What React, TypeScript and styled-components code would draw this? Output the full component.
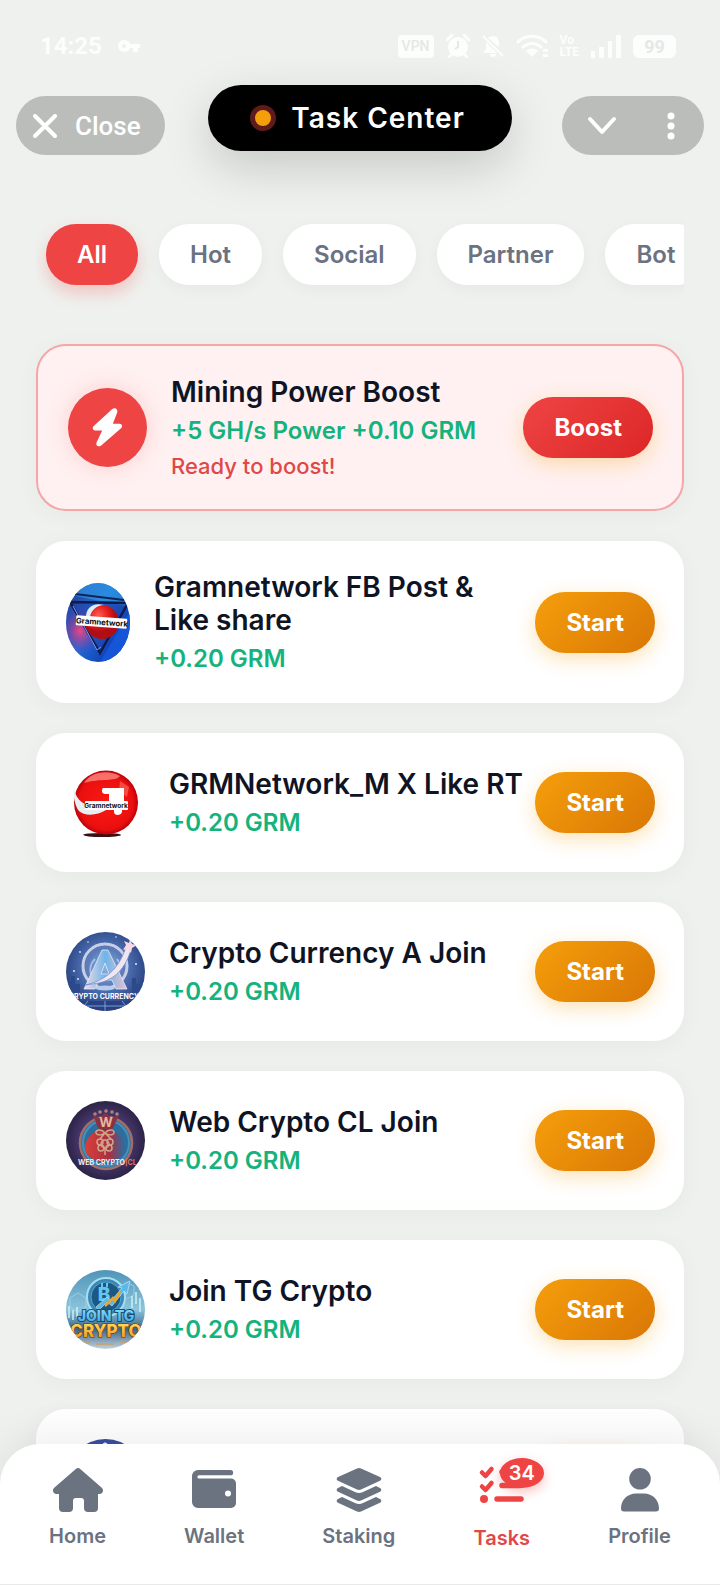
import { ReactNode, useState } from "react";
import styled, { createGlobalStyle, css } from "styled-components";

const GlobalStyles = createGlobalStyle`
    :root {
        --color-page: #eff1ee;
        --color-card: #ffffff;
        --color-red: #ef4444;
        --color-red-dark: #dc2626;
        --color-red-text: #e04848;
        --color-amber: #f59e0b;
        --color-amber-dark: #d97706;
        --color-green: #14b37d;
        --color-ink: #0f1424;
        --color-muted: #6b7280;
        --color-status: #fcfdfc;
        --color-pill: #bbbdbb;
    }

    * {
        box-sizing: border-box;
        margin: 0;
        padding: 0;
    }

    body {
        font-family: Inter, "Liberation Sans", sans-serif;
        background-color: var(--color-page);
        color: var(--color-ink);
    }

    button {
        border: none;
        font: inherit;
        cursor: pointer;
    }

    svg {
        display: block;
    }
`;

const Screen = styled.div`
    position: relative;
    display: flex;
    flex-direction: column;
    height: 100vh;
    overflow: hidden;
`;

const StatusBar = styled.div`
    display: flex;
    align-items: center;
    justify-content: space-between;
    padding: 34px 44px 0 40px;
    height: 58px;
    color: var(--color-status);
    font-family: Roboto, sans-serif;
`;

const StatusGroup = styled.div`
    display: flex;
    align-items: center;
    gap: 12px;
`;

const Clock = styled.span`
    font-size: 24px;
    font-weight: 700;
    line-height: 24px;
    margin-right: 3px;
`;

const StatusTag = styled.span`
    padding: 0 4px;
    border-radius: 4px;
    background-color: var(--color-status);
    color: #e6e8e6;
    font-size: 14px;
    font-weight: 500;
    line-height: 23px;
`;

const Volte = styled.span`
    display: grid;
    font-size: 12px;
    font-weight: 800;
    line-height: 12px;
`;

const Battery = styled.span`
    width: 43px;
    border-radius: 6px;
    background-color: var(--color-status);
    color: #e6e8e6;
    font-size: 18px;
    font-weight: 700;
    line-height: 23px;
    text-align: center;
`;

const Header = styled.header`
    display: grid;
    grid-template-columns: 1fr auto 1fr;
    align-items: end;
    padding: 27px 16px 0;
`;

const pill = css`
    display: flex;
    align-items: center;
    height: 59px;
    border-radius: 30px;
    background-color: var(--color-pill);
    color: #ffffff;
`;

const CloseButton = styled.button`
    ${pill}
    justify-self: start;
    gap: 18px;
    padding: 0 24px 0 17px;
    font-family: Roboto, sans-serif;
    font-size: 26px;
    font-weight: 500;
`;

const WindowControls = styled.div`
    ${pill}
    justify-self: end;
    gap: 36px;
    padding: 0 16px 0 24px;
`;

const ControlButton = styled.button`
    display: grid;
    place-items: center;
    height: 100%;
    background: none;
    color: inherit;
`;

const Island = styled.div`
    display: flex;
    align-items: center;
    gap: 15px;
    height: 66px;
    margin-bottom: 4px;
    padding: 0 47px 0 42px;
    border-radius: 33px;
    background-color: #000000;
    color: #ffffff;
    box-shadow: 0 16px 48px rgba(0, 0, 0, 0.17);

    h1 {
        font-size: 28px;
        font-weight: 600;
        letter-spacing: 1px;
    }
`;

const Dot = styled.span`
    width: 26px;
    height: 26px;
    border: 5px solid #5f1b1b;
    border-radius: 50%;
    background-color: var(--color-amber);
`;

const Filters = styled.div`
    display: flex;
    gap: 21px;
    flex-shrink: 0;
    margin: 45px 36px 0;
    padding: 24px 10px 35px;
    overflow-x: auto;
    scrollbar-width: none;
`;

const FilterButton = styled.button<{ $active: boolean }>`
    flex-shrink: 0;
    padding: 16px 31px;
    border-radius: 30px;
    font-size: 24px;
    font-weight: 600;
    line-height: 29px;
    background-color: var(--color-card);
    color: var(--color-muted);
    box-shadow: 0 4px 16px rgba(0, 0, 0, 0.04);

    ${(props) => props.$active && css`
        background-color: var(--color-red);
        color: #ffffff;
        box-shadow: 0 8px 16px rgba(239, 68, 68, 0.25);
    `}
`;

const TaskList = styled.main`
    flex: 1;
    min-height: 0;
    display: flex;
    flex-direction: column;
    gap: 30px;
    padding: 24px 36px 160px;
    overflow-y: auto;
    scrollbar-width: none;
`;

const Card = styled.article<{ $highlight?: boolean }>`
    flex-shrink: 0;
    display: flex;
    align-items: center;
    gap: 8px;
    padding: 30px 29px 30px 30px;
    border-radius: 30px;
    background-color: var(--color-card);
    box-shadow: 0 4px 24px rgba(0, 0, 0, 0.04);

    ${(props) => props.$highlight && css`
        border: 2px solid #f5a6a6;
        background-color: #fff1f1;
    `}
`;

const Avatar = styled.div<{ $narrow?: boolean }>`
    flex-shrink: 0;
    width: ${(props) => (props.$narrow ? "64px" : "79px")};
    height: 79px;
    margin-right: 16px;
    border-radius: 50%;
    overflow: hidden;

    svg {
        width: 100%;
        height: 100%;
    }
`;

const BoostIcon = styled(Avatar)`
    display: grid;
    place-items: center;
    background-color: var(--color-red);
    box-shadow: 0 0 24px rgba(239, 68, 68, 0.2);

    svg {
        width: 31px;
        height: 41px;
    }
`;

const Info = styled.div`
    flex: 1;
    min-width: 0;
`;

const Title = styled.h2`
    font-size: 28px;
    font-weight: 600;
    line-height: 33px;
`;

const Reward = styled.p`
    margin-top: 8px;
    font-size: 24px;
    font-weight: 600;
    line-height: 28px;
    color: var(--color-green);
`;

const Status = styled.p`
    margin-top: 8px;
    font-size: 22px;
    font-weight: 500;
    line-height: 26px;
    color: var(--color-red-text);
`;

const ActionButton = styled.button<{ $danger?: boolean }>`
    flex-shrink: 0;
    padding: 16px 31px;
    border-radius: 30px;
    font-size: 24px;
    font-weight: 700;
    line-height: 29px;
    color: #ffffff;
    background: ${(props) => props.$danger
        ? "linear-gradient(135deg, var(--color-red), var(--color-red-dark))"
        : "linear-gradient(135deg, var(--color-amber), var(--color-amber-dark))"};
    box-shadow: 0 6px 20px rgba(245, 158, 11, 0.3);
`;

const BottomNav = styled.nav`
    position: absolute;
    inset: auto 0 0;
    display: flex;
    justify-content: space-around;
    align-items: flex-start;
    padding: 20px 10px 34px;
    border-bottom: 1px solid #e8e9e8;
    border-radius: 40px 40px 0 0;
    background-color: var(--color-card);
    box-shadow: 0 -8px 40px rgba(0, 0, 0, 0.07);
`;

const NavLink = styled.a<{ $active?: boolean }>`
    display: flex;
    flex-direction: column;
    align-items: center;
    gap: ${(props) => (props.$active ? "10px" : "8px")};
    font-size: 20px;
    font-weight: 600;
    line-height: 24px;
    text-decoration: none;
    color: ${(props) => (props.$active ? "var(--color-red-text)" : "var(--color-muted)")};

    svg {
        width: 52px;
        height: 52px;
    }
`;

const NavIcon = styled.span`
    position: relative;
`;

const Badge = styled.span`
    position: absolute;
    top: -6px;
    right: -16px;
    padding: 3px 9px;
    border-radius: 50%;
    background-color: var(--color-red);
    color: #ffffff;
    font-size: 20px;
    font-weight: 600;
    line-height: 24px;
    box-shadow: 0 4px 12px rgba(239, 68, 68, 0.35);
`;

function StatusIcons(){
    return (
        <>
            <svg width="24" height="24" viewBox="0 0 24 24" fill="currentColor">
                <circle cx="12" cy="13" r="10" />
                <path d="M1 6 6 1M18 1l5 5M5 21l-2 2M19 21l2 2" stroke="currentColor" strokeWidth="3" strokeLinecap="round" />
                <path d="M12 7v6l-3 2" fill="none" stroke="#e6e8e6" strokeWidth="2" />
            </svg>
            <svg width="22" height="24" viewBox="0 0 22 24" fill="currentColor">
                <path d="M6 4c1-1 3-2 5-2 4 0 6 3 6 7v4zM4 8l11 11H1l3-4zM8 20h6a3 3 0 0 1-6 0z" />
                <path d="m1 2 20 20" stroke="currentColor" strokeWidth="2" />
            </svg>
            <svg width="32" height="24" viewBox="0 0 32 24" fill="none" stroke="currentColor" strokeWidth="3">
                <path d="M1 9c8-9 22-9 30 0M6 14c6-6 14-6 20 0M11 18c3-3 7-3 10 0" />
                <path d="m12 19 4 4 4-4c-2-3-6-3-8 0zM27 15h5v3h-5zM27 20h5v3h-5z" fill="currentColor" stroke="none" />
            </svg>
            <Volte><span>Vo</span><span>LTE</span></Volte>
            <svg width="30" height="24" viewBox="0 0 30 24" fill="currentColor">
                <path d="M0 17h4v7H0zM8 13h5v11H8zM17 7h4v17h-4zM25 1h5v23h-5z" />
            </svg>
        </>
    );
}

function BoltIcon(){
    return (
        <svg viewBox="0 0 32 42" fill="#ffffff">
            <path d="M21 1.800C24 0 27 2.200 26 5.500L21.500 17H28.500C31 17 32 20 30 21.800L9.500 39.500C6.500 41.800 3.500 39.500 4.800 36.200L10.500 24H3.200C.8 24 0 21.200 1.800 19.500z" />
        </svg>
    );
}

function GramShieldArt(){
    return (
        <svg viewBox="0 0 64 79" preserveAspectRatio="none">
            <defs>
                <linearGradient id="shieldBg" x1="0" y1="0" x2="1" y2="0.7">
                    <stop offset="0" stopColor="#27358f" />
                    <stop offset="0.5" stopColor="#1f6fd8" />
                    <stop offset="1" stopColor="#0b2fa8" />
                </linearGradient>
                <radialGradient id="shieldGlow">
                    <stop offset="0" stopColor="#f0457f" />
                    <stop offset="1" stopColor="#7a2fa8" stopOpacity="0" />
                </radialGradient>
                <radialGradient id="redBall" cx="0.4" cy="0.3">
                    <stop offset="0" stopColor="#ff5a50" />
                    <stop offset="0.6" stopColor="#e31b1b" />
                    <stop offset="1" stopColor="#b00d14" />
                </radialGradient>
            </defs>
            <rect width="64" height="79" fill="url(#shieldBg)" />
            <path d="M12 0H64V24L10 13z" fill="#2f96e6" opacity="0.7" />
            <ellipse cx="14" cy="48" rx="20" ry="24" fill="url(#shieldGlow)" />
            <path d="M34 79 64 28V79z" fill="#1556d8" />
            <path d="M9 11 58 17" stroke="#132253" strokeWidth="2" />
            <path d="m4 19 58 1-28 50z" fill="#25369c" fillOpacity="0.35" stroke="#101b48" strokeWidth="2.500" />
            <path d="m7 23 24 44 4-3" fill="none" stroke="#7f9cff" strokeWidth="1" />
            <circle cx="36" cy="39" r="17" fill="url(#redBall)" />
            <path d="M20 34c0-10 8-15 18-12-7 0-13 5-14 12z" fill="#dfeefb" />
            <g transform="rotate(4 36 39)">
                <rect x="10" y="34" width="51" height="10" rx="1" fill="#ffffff" />
                <text x="36" y="42" fontSize="7.800" fontWeight="700" textAnchor="middle" fill="#0b0b0f">Gramnetwork</text>
            </g>
        </svg>
    );
}

function GramBallArt(){
    return (
        <svg viewBox="0 0 79 79">
            <defs>
                <radialGradient id="glossBall" cx="0.5" cy="0.5">
                    <stop offset="0" stopColor="#fb1a12" />
                    <stop offset="0.85" stopColor="#ea0f0f" />
                    <stop offset="1" stopColor="#bd0008" />
                </radialGradient>
            </defs>
            <rect width="79" height="79" fill="#ffffff" />
            <ellipse cx="36" cy="72" rx="19" ry="2" fill="#3b1013" />
            <circle cx="40" cy="39.500" r="32" fill="url(#glossBall)" />
            <path d="M18 20C24 9 42 6 54 13c-4 6-20 2-36 7z" fill="#ff9a90" opacity="0.7" />
            <path d="m54 18 9 6-2 10-8-7z" fill="#ff8478" opacity="0.5" />
            <path d="M8 26c3 12 10 17 22 17h10v4c-9 6-22 6-27 1-4-5-6-15-5-22z" fill="#e6eff1" />
            <path d="M37 25h21v14h-2v10c-1 4-8 4-8 0v-5h-5V31h-4c-3 0-4-4-2-6z" fill="#ffffff" />
            <rect x="19" y="38" width="43" height="9" rx="1" fill="#ffffff" />
            <text x="40" y="45" fontSize="6.500" fontWeight="700" textAnchor="middle" fill="#111111">Gramnetwork</text>
        </svg>
    );
}

function CryptoCurrencyArt(){
    return (
        <svg viewBox="0 0 79 79">
            <defs>
                <radialGradient id="nightBg" cx="0.5" cy="0.45">
                    <stop offset="0" stopColor="#8fb2e0" />
                    <stop offset="0.6" stopColor="#4a6cae" />
                    <stop offset="1" stopColor="#2f4888" />
                </radialGradient>
                <linearGradient id="letterA" x1="0" x2="1">
                    <stop offset="0" stopColor="#f0d9e6" />
                    <stop offset="0.5" stopColor="#6fb5e6" />
                    <stop offset="1" stopColor="#e9bfd0" />
                </linearGradient>
            </defs>
            <rect width="79" height="79" fill="url(#nightBg)" />
            <path d="M0 60V50h5v-6h4v8h5v8zM79 60V47h-4v5h-5v-6h-4v14z" fill="#2b4a8c" />
            <path d="M0 69h79v10H0z" fill="#2c3f82" />
            <path d="M39 69v10M22 69l-8 10M56 69l8 10M10 74h60" stroke="#86b8ec" strokeWidth="0.800" />
            <circle cx="39" cy="34" r="22" fill="none" stroke="#c6cfe6" strokeWidth="3" />
            <circle cx="39" cy="34" r="19" fill="none" stroke="#697fb8" strokeWidth="1" />
            <path d="M25 43c-2-8 0-12 4-16M51 43c4-8 3-12 0-16" stroke="#d2ebff" strokeWidth="2" fill="none" opacity="0.6" />
            <path fillRule="evenodd" d="M36 18h6l19 39H50l-4-9H33l-4 9H18zM39 31l-4 11h8z" fill="url(#letterA)" stroke="#e6eaf8" strokeWidth="0.800" />
            <path d="M19 53c20-4 34-16 41-38l6-1c-6 23-18 36-40 38z" fill="#f1e6f0" stroke="#7090ce" strokeWidth="0.800" />
            <path d="m64 7 2 5 5 1-5 3-1 5-3-4-5 1 3-5-2-4 5 2z" fill="#f7d8e4" />
            <ellipse cx="39" cy="56" rx="10" ry="2.500" fill="#b6cdec" />
            <g fill="#d7ecff">
                <circle cx="14" cy="20" r="0.900" /><circle cx="22" cy="10" r="0.800" /><circle cx="8" cy="39" r="1" />
                <circle cx="70" cy="32" r="1" /><circle cx="50" cy="5" r="0.800" /><circle cx="12" cy="47" r="1" />
            </g>
            <text x="38" y="67" fontSize="7" fontWeight="700" textAnchor="middle" fill="#ffffff">CRYPTO CURRENCY</text>
        </svg>
    );
}

function WebCryptoArt(){
    return (
        <svg viewBox="0 0 79 79">
            <defs>
                <radialGradient id="purpleBg">
                    <stop offset="0" stopColor="#5a4a86" />
                    <stop offset="0.6" stopColor="#4a3870" />
                    <stop offset="1" stopColor="#2c2446" />
                </radialGradient>
                <linearGradient id="bag" x1="0" x2="1">
                    <stop offset="0" stopColor="#d8403a" />
                    <stop offset="0.6" stopColor="#a92f42" />
                    <stop offset="1" stopColor="#2b6da2" />
                </linearGradient>
            </defs>
            <rect width="79" height="79" fill="url(#purpleBg)" />
            <circle cx="40" cy="42" r="26" fill="#2a6fa0" stroke="#a07068" strokeWidth="2.500" />
            <circle cx="40" cy="42" r="23" fill="none" stroke="#4a8fb8" strokeWidth="2" />
            <path d="M34 28c-10 5-16 12-15 20 2 9 12 13 20 13s19-4 20-13c1-8-5-15-14-20z" fill="url(#bag)" />
            <path d="m27 14 5 13 7 5 8-5 6-13-7 3-7-5-6 5z" fill="#8f3040" />
            <g fill="#b08378">
                <circle cx="29" cy="13" r="1.800" /><circle cx="34" cy="11" r="1.800" /><circle cx="40" cy="10" r="1.800" />
                <circle cx="46" cy="11" r="1.800" /><circle cx="51" cy="13" r="1.800" />
            </g>
            <text x="40" y="26" fontSize="13" fontWeight="700" textAnchor="middle" fill="#e3b8a4">W</text>
            <g fill="none" stroke="#d0a58a" strokeWidth="1.500">
                <path d="M39 32c-4-5-10-3-9 0s6 2 9 0c4-5 10-3 9 0s-6 2-9 0l-5 6M39 32l6 6" />
                <circle cx="39" cy="43" r="4" />
                <circle cx="34" cy="41" r="3" /><circle cx="44" cy="41" r="3" />
                <circle cx="35" cy="47" r="3" /><circle cx="43" cy="47" r="3" />
                <path d="M39 47v7" />
            </g>
            <text x="12" y="64" fontSize="7" fontWeight="700" fill="#f0eef5">
                WEB CRYPTO<tspan fill="#e0745c">|CL</tspan>
            </text>
        </svg>
    );
}

function JoinCryptoArt(){
    return (
        <svg viewBox="0 0 79 79">
            <defs>
                <linearGradient id="cityBg" x1="0" y1="0" x2="0" y2="1">
                    <stop offset="0" stopColor="#4f95b8" />
                    <stop offset="0.5" stopColor="#8cc4dc" />
                    <stop offset="0.75" stopColor="#3b6488" />
                    <stop offset="1" stopColor="#c3d3de" />
                </linearGradient>
                <linearGradient id="gold" x1="0" y1="0" x2="0" y2="1">
                    <stop offset="0" stopColor="#ffe266" />
                    <stop offset="1" stopColor="#f08e14" />
                </linearGradient>
                <linearGradient id="ice" x1="0" y1="0" x2="0" y2="1">
                    <stop offset="0" stopColor="#8fe0fa" />
                    <stop offset="1" stopColor="#3ba6e2" />
                </linearGradient>
            </defs>
            <rect width="79" height="79" fill="url(#cityBg)" />
            <path d="M4 28l8-5 8 5v9l-8 5-8-5zM60 12l8 4v9l-8 4" fill="none" stroke="#9fd6ea" strokeWidth="0.800" />
            <path d="M3 36v12M7 40v10M11 37v10M66 26v12M70 22v12M74 28v14" stroke="#cdf0f5" strokeWidth="1.500" />
            <circle cx="40" cy="27" r="19" fill="#3c86b4" stroke="#a6def2" strokeWidth="2" />
            <circle cx="40" cy="27" r="15" fill="#1c587f" stroke="#4aa9d8" strokeWidth="1" />
            <text x="38" y="31" fontSize="19" fontWeight="800" textAnchor="middle" fill="#63c6f2">B</text>
            <path d="M36 13v4M41 13v4" stroke="#63c6f2" strokeWidth="2" />
            <path d="m30 37 11-10 4 4 11-13-4-1 12-6-3 13-3-3-12 15-5-4-8 8z" fill="#5cb8ea" stroke="#d5f2fc" strokeWidth="0.600" />
            <path d="m39 36 8-8 2 3 5-9" fill="none" stroke="#f6a21c" strokeWidth="2.500" />
            <text x="40" y="51" fontSize="14" fontWeight="800" textAnchor="middle" fill="url(#ice)" stroke="#174a70" strokeWidth="2" paintOrder="stroke">JOIN TG</text>
            <text x="40" y="67" fontSize="17" fontWeight="800" textAnchor="middle" fill="url(#gold)" stroke="#5a3510" strokeWidth="1.200" paintOrder="stroke">CRYPTO</text>
            <path d="M14 73h10M30 74h18M54 72h10" stroke="#d79a4b" strokeWidth="2" opacity="0.6" />
        </svg>
    );
}

function BlueGemArt(){
    return (
        <svg viewBox="0 0 79 79">
            <rect width="79" height="79" fill="#3b4f9f" />
            <path d="m39 3 22 18H19z" fill="#bcd4f3" />
            <circle cx="39" cy="7" r="3" fill="#f2f8ff" />
        </svg>
    );
}

interface Task {
    title?: string;
    reward?: string;
    art: ReactNode;
    narrow?: boolean;
}

const tasks: Task[] = [
    { title: "Gramnetwork FB Post & Like share", reward: "+0.20 GRM", art: <GramShieldArt />, narrow: true },
    { title: "GRMNetwork_M X Like RT", reward: "+0.20 GRM", art: <GramBallArt /> },
    { title: "Crypto Currency A Join", reward: "+0.20 GRM", art: <CryptoCurrencyArt /> },
    { title: "Web Crypto CL Join", reward: "+0.20 GRM", art: <WebCryptoArt /> },
    { title: "Join TG Crypto", reward: "+0.20 GRM", art: <JoinCryptoArt /> },
    { art: <BlueGemArt /> },
];

const filters = ["All", "Hot", "Social", "Partner", "Bot"];

const navItems = [
    {
        label: "Home",
        icon: (
            <path d="M23.500 5.200a3.500 3.500 0 0 1 5 0L49.500 23.500c3 2.600 1.200 6.500-2 6.500H46v14a4 4 0 0 1-4 4h-6a4 4 0 0 1-4-4v-7a3 3 0 0 0-3-3h-5a3 3 0 0 0-3 3v7a4 4 0 0 1-4 4h-6a4 4 0 0 1-4-4V30H4.500c-3.200 0-5-3.900-2-6.500z" />
        ),
    },
    {
        label: "Wallet",
        icon: (
            <path fillRule="evenodd" d="M10 6h32.500a2.600 2.600 0 0 1 0 5.300H11a1.500 1.500 0 0 0 0 3.200H43a5 5 0 0 1 5 5V39a5 5 0 0 1-5 5H10a6 6 0 0 1-6-6V12a6 6 0 0 1 6-6zm30 20.500a3 3 0 1 0 0 6 3 3 0 0 0 0-6z" />
        ),
    },
    {
        label: "Staking",
        icon: (
            <path d="M24 4.500a5 5 0 0 1 4 0l19 8.500c1.800.9 1.800 2.900 0 3.800L28 25.500a5 5 0 0 1-4 0L5 16.800c-1.800-.9-1.800-2.900 0-3.800zM5 24l4-1.900 13 6a9 9 0 0 0 8 0l13-6 4 1.900c1.800.9 1.800 2.900 0 3.800l-19 8.700a5 5 0 0 1-4 0L5 27.800c-1.800-.9-1.800-2.900 0-3.800zM5 35l4-1.900 13 6a9 9 0 0 0 8 0l13-6 4 1.900c1.800.9 1.800 2.900 0 3.800l-19 8.700a5 5 0 0 1-4 0L5 38.800c-1.800-.9-1.800-2.900 0-3.800z" />
        ),
    },
    {
        label: "Tasks",
        badge: 34,
        icon: (
            <g fill="#ef4444" stroke="#ef4444">
                <path d="m6 8.500 3.500 3.500L15.500 5M6 22.500 9.500 26l6-7" fill="none" strokeWidth="4.500" strokeLinecap="round" strokeLinejoin="round" />
                <circle cx="8" cy="35" r="4" stroke="none" />
                <path d="M26 8h18M26 21.500h18M21 35h24" strokeWidth="5.500" strokeLinecap="round" />
            </g>
        ),
    },
    {
        label: "Profile",
        icon: (
            <path d="M26 4a10.800 10.800 0 1 1 0 21.600A10.800 10.800 0 0 1 26 4zM22 29.500h8c8.500 0 15 6.500 15 15a3 3 0 0 1-3 3H10a3 3 0 0 1-3-3c0-8.500 6.500-15 15-15z" />
        ),
    },
];

function TaskCard({ title, reward, art, narrow }: Task){
    return (
        <Card>
            <Avatar $narrow={narrow}>{art}</Avatar>
            <Info>
                {title && <Title>{title}</Title>}
                {reward && <Reward>{reward}</Reward>}
            </Info>
            <ActionButton>Start</ActionButton>
        </Card>
    );
}

export default function App(){
    const [filter, setFilter] = useState("All");

    return (
        <>
            <GlobalStyles />
            <Screen>
                <StatusBar>
                    <StatusGroup>
                        <Clock>14:25</Clock>
                        <svg width="24" height="14" viewBox="0 0 24 14" fill="currentColor">
                            <path fillRule="evenodd" d="M7 1c3 0 5 1 6 4h10v4h-2v4h-5V9h-3c-1 3-3 4-6 4a6 6 0 0 1 0-12zm0 4a2 2 0 1 0 0 4 2 2 0 0 0 0-4z" />
                        </svg>
                    </StatusGroup>
                    <StatusGroup>
                        <StatusTag>VPN</StatusTag>
                        <StatusIcons />
                        <Battery>99</Battery>
                    </StatusGroup>
                </StatusBar>

                <Header>
                    <CloseButton>
                        <svg width="24" height="24" viewBox="0 0 24 24" fill="none" stroke="currentColor" strokeWidth="4" strokeLinecap="round">
                            <path d="m2 2 20 20M22 2 2 22" />
                        </svg>
                        Close
                    </CloseButton>
                    <Island>
                        <Dot />
                        <h1>Task Center</h1>
                    </Island>
                    <WindowControls>
                        <ControlButton aria-label="Minimize">
                            <svg width="32" height="24" viewBox="0 0 32 24" fill="none" stroke="currentColor" strokeWidth="4" strokeLinecap="round" strokeLinejoin="round">
                                <path d="m4 5 12 13L28 5" />
                            </svg>
                        </ControlButton>
                        <ControlButton aria-label="More options">
                            <svg width="34" height="28" viewBox="0 0 34 28" fill="currentColor">
                                <circle cx="17" cy="4" r="3.500" />
                                <circle cx="17" cy="14" r="3.500" />
                                <circle cx="17" cy="24" r="3.500" />
                            </svg>
                        </ControlButton>
                    </WindowControls>
                </Header>

                <Filters>
                    {filters.map((name) => (
                        <FilterButton key={name} $active={name === filter} onClick={() => setFilter(name)}>
                            {name}
                        </FilterButton>
                    ))}
                </Filters>

                <TaskList>
                    <Card $highlight>
                        <BoostIcon><BoltIcon /></BoostIcon>
                        <Info>
                            <Title>Mining Power Boost</Title>
                            <Reward>+5 GH/s Power +0.10 GRM</Reward>
                            <Status>Ready to boost!</Status>
                        </Info>
                        <ActionButton $danger>Boost</ActionButton>
                    </Card>
                    {tasks.map((task, index) => <TaskCard key={index} {...task} />)}
                </TaskList>

                <BottomNav>
                    {navItems.map(({ label, icon, badge }) => (
                        <NavLink key={label} href={`#${label.toLowerCase()}`} $active={label === "Tasks"}>
                            <NavIcon>
                                <svg viewBox="0 0 52 52" fill="currentColor">{icon}</svg>
                                {badge && <Badge>{badge}</Badge>}
                            </NavIcon>
                            {label}
                        </NavLink>
                    ))}
                </BottomNav>
            </Screen>
        </>
    );
}
